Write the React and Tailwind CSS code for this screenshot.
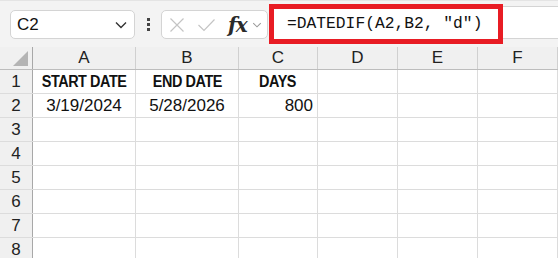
import React from 'react'

const cols = [
  { name: 'A', w: 'w-[103px]' },
  { name: 'B', w: 'w-[103px]' },
  { name: 'C', w: 'w-[79px]' },
  { name: 'D', w: 'w-[80px]' },
  { name: 'E', w: 'w-[80px]' },
  { name: 'F', w: 'flex-1' },
]

const rows = [
  ['START DATE', 'END DATE', 'DAYS', '', '', ''],
  ['3/19/2024', '5/28/2026', '800', '', '', ''],
  ['', '', '', '', '', ''],
  ['', '', '', '', '', ''],
  ['', '', '', '', '', ''],
  ['', '', '', '', '', ''],
  ['', '', '', '', '', ''],
  ['', '', '', '', '', ''],
]

const Chevron = ({ className }) => (
  <svg viewBox="0 0 12 8" className={className} fill="none" stroke="currentColor" strokeWidth="1.4">
    <path d="M1 1.5 L6 6.5 L11 1.5" />
  </svg>
)

const App = () => {
  return (
    <div className="w-[558px] h-[258px] overflow-hidden bg-white font-['Liberation_Sans',sans-serif] text-[#111]">
      {/* Formula bar */}
      <div className="relative h-[47px] bg-[#f3f3f3] border-t border-[#e4e4e4] flex items-start pt-[9px]">
        {/* Name box */}
        <div className="ml-[10px] w-[125px] h-[29px] bg-white border border-[#d4d4d4] rounded-[5px] flex items-center justify-between pl-[6px] pr-[7px]">
          <span className="text-[17px]">C2</span>
          <Chevron className="w-[12px] h-[8px] text-[#333]" />
        </div>

        {/* Dots */}
        <div className="w-[26px] h-[29px] flex flex-col items-center justify-center gap-[2px]">
          <div className="w-[3px] h-[3px] bg-[#444]" />
          <div className="w-[3px] h-[3px] bg-[#444]" />
          <div className="w-[3px] h-[3px] bg-[#444]" />
        </div>

        {/* Cancel / Enter / fx */}
        <div className="w-[107px] h-[29px] bg-white border border-[#d4d4d4] rounded-[5px] flex items-center pl-[7px]">
          <svg viewBox="0 0 16 16" className="w-[16px] h-[16px] text-[#c4c4c4]" fill="none" stroke="currentColor" strokeWidth="1.2">
            <path d="M1.5 1.5 L14.5 14.5 M14.5 1.5 L1.5 14.5" />
          </svg>
          <svg viewBox="0 0 18 14" className="ml-[12px] w-[19px] h-[14px] text-[#c4c4c4]" fill="none" stroke="currentColor" strokeWidth="1.2">
            <path d="M1 7 L6.5 12.5 L17 1.5" />
          </svg>
          <span className="ml-[12px] font-['DejaVu_Serif',serif] italic font-semibold text-[20px] leading-none text-[#2a2a2a] tracking-[-0.04em]">fx</span>
          <Chevron className="ml-[5px] w-[10px] h-[6px] text-[#999]" />
        </div>

        {/* Formula input */}
        <div className="ml-[2px] mt-[-4px] flex-1 h-[33px] bg-white border-y border-[#d4d4d4]" />

        {/* Highlighted formula */}
        <div className="absolute left-[269px] top-[3px] w-[234px] h-[40px] border-[5px] border-[#e81c24] bg-white flex items-center pl-[13px]">
          <span className="font-['Liberation_Mono',monospace] text-[16.3px] text-[#111]">=DATEDIF(A2,B2, "d")</span>
        </div>
      </div>

      {/* Grid */}
      <div className="flex h-[23px] bg-[#f0f0f0] border-b border-[#bdbdbd]">
        <div className="relative w-[33px] border-r border-[#a8a8a8]">
          <svg viewBox="0 0 16 16" className="absolute right-[4px] bottom-[3px] w-[15px] h-[15px]">
            <path d="M16 0 L16 16 L0 16 Z" fill="#b4b4b4" />
          </svg>
        </div>
        {cols.map((c) => (
          <div key={c.name} className={`${c.w} border-r border-[#d0d0d0] flex items-center justify-center text-[17px] text-[#222]`}>
            {c.name}
          </div>
        ))}
      </div>

      {rows.map((r, i) => (
        <div key={i} className="flex h-[24px] border-b border-[#dcdcdc]">
          <div className="w-[33px] bg-[#f0f0f0] border-r border-[#a8a8a8] flex items-center justify-center text-[17px] text-[#222]">
            {i + 1}
          </div>
          {cols.map((c, j) => (
            <div
              key={c.name}
              className={`${c.w} border-r border-[#dcdcdc] flex items-center whitespace-nowrap text-[17px] ${
                j === 2 && i === 1 ? 'justify-end pr-[4px]' : 'justify-center'
              }`}
            >
              {i === 0 ? (
                <span className="inline-block font-bold text-[16px] tracking-[-0.03em] scale-x-[0.9]">{r[j]}</span>
              ) : (
                r[j]
              )}
            </div>
          ))}
        </div>
      ))}
    </div>
  )
}

export default App
